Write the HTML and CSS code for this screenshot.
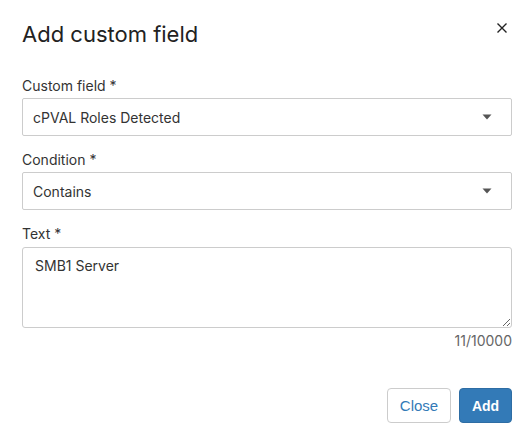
FILE: index.html
```html
<!DOCTYPE html>
<html>
<head>
<meta charset="utf-8">
<link rel="stylesheet" href="styles.css">
</head>
<body>
<div class="modal">
  <div class="header">
    <h1 class="title">Add custom field</h1>
    <button class="close-x" aria-label="Close">
      <svg width="12" height="12" viewBox="0 0 12 12"><path d="M1.5 1.5 L10.5 10.5 M10.5 1.5 L1.5 10.5" stroke="#222" stroke-width="1.4" fill="none"/></svg>
    </button>
  </div>
  <div class="group">
    <label class="label">Custom field *</label>
    <div class="select">
      <span class="select-value">cPVAL Roles Detected</span>
      <svg class="caret" width="10" height="6" viewBox="0 0 10 6"><path d="M0.5 0.5 H9.5 L5 5.5 Z" fill="#555"/></svg>
    </div>
  </div>
  <div class="group">
    <label class="label">Condition *</label>
    <div class="select">
      <span class="select-value">Contains</span>
      <svg class="caret" width="10" height="6" viewBox="0 0 10 6"><path d="M0.5 0.5 H9.5 L5 5.5 Z" fill="#555"/></svg>
    </div>
  </div>
  <div class="group text-group">
    <label class="label">Text *</label>
    <textarea class="textarea">SMB1 Server</textarea>
    <div class="counter">11/10000</div>
  </div>
  <div class="footer">
    <button class="btn btn-default">Close</button>
    <button class="btn btn-primary">Add</button>
  </div>
</div>
</body>
</html>
```
FILE: styles.css
```css
* { box-sizing: border-box; }
html, body { margin: 0; padding: 0; background: #fff; }
body {
  font-family: Inter, "Noto Sans", sans-serif;
  color: #333;
  width: 532px;
  height: 445px;
  overflow: hidden;
}
.modal {
  padding: 20px 20px 0 22px;
}
.header {
  display: flex;
  justify-content: space-between;
  align-items: flex-start;
}
.title {
  margin: 0;
  font-size: 22px;
  line-height: 28px;
  font-weight: 400;
  color: #222;
}
.close-x {
  border: 0;
  background: none;
  padding: 0;
  margin: 2px 4px 0 0;
  width: 12px;
  height: 12px;
  display: flex;
}
.group {
  display: flex;
  flex-direction: column;
  margin-top: 14px;
}
.header + .group { margin-top: 28px; }
.label {
  font-size: 14px;
  line-height: 20px;
  margin-bottom: 2px;
  color: #333;
}
.select {
  height: 38px;
  border: 1px solid #ccc;
  border-radius: 2px;
  display: flex;
  align-items: center;
  justify-content: space-between;
  padding: 0 19px 0 10px;
}
.select-value {
  font-size: 14px;
  color: #333;
}
.caret { display: block; }
.textarea {
  height: 81px;
  border: 1px solid #ccc;
  border-radius: 3px;
  padding: 8px 12px;
  font-family: Inter, "Noto Sans", sans-serif;
  font-size: 14px;
  line-height: 20px;
  color: #333;
  resize: vertical;
  outline: none;
  margin: 1px 0 0 0;
}
.counter {
  text-align: right;
  font-size: 14px;
  line-height: 20px;
  color: #666;
  margin-top: 3px;
}
.footer {
  display: flex;
  justify-content: flex-end;
  gap: 8px;
  margin-top: 37px;
}
.btn {
  height: 35px;
  border-radius: 4px;
  font-family: "Liberation Sans", Arial, sans-serif;
  font-size: 14px;
  padding: 0 10px;
  cursor: pointer;
}
.btn-default {
  background: #fff;
  border: 1px solid #ccc;
  color: #337ab7;
  width: 64px;
  font-size: 15px;
}
.btn-primary {
  background: #337ab7;
  border: 1px solid #2e6da4;
  color: #fff;
  font-weight: bold;
  width: 53px;
}
```
